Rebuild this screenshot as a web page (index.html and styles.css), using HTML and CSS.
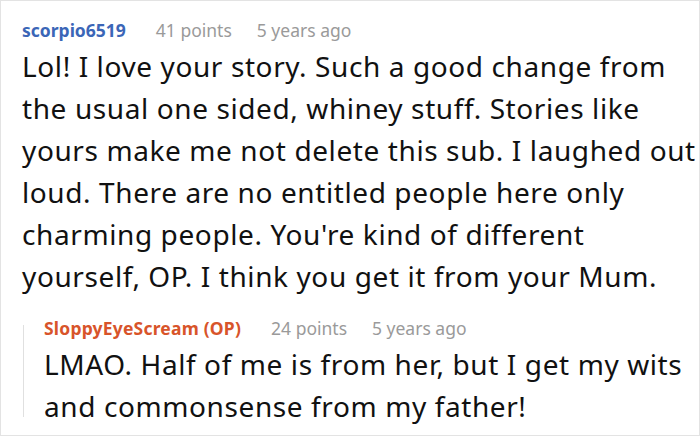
FILE: index.html
```html
<!DOCTYPE html>
<html lang="en">
<head>
    <meta charset="UTF-8">
    <title>Comment thread</title>
    <link rel="stylesheet" href="styles.css">
</head>
<body>
    <div class="thread">
        <div class="comment">
            <div class="meta">
                <span class="author">scorpio6519</span>
                <span class="points">41 points</span>
                <span class="age">5 years ago</span>
            </div>
            <p class="text">Lol! I love your story. Such a good change from the usual one sided, whiney stuff. Stories like yours make me not delete this sub. I laughed out loud. There are no entitled people here only charming people. You're kind of different yourself, OP. I think you get it from your Mum.</p>

            <div class="comment reply">
                <div class="meta">
                    <span class="author op">SloppyEyeScream (OP)</span>
                    <span class="points">24 points</span>
                    <span class="age">5 years ago</span>
                </div>
                <p class="text">LMAO. Half of me is from her, but I get my wits and commonsense from my father!</p>
            </div>
        </div>
    </div>
</body>
</html>
```

FILE: styles.css
```css
body {
    margin: 0;
    background-color: white;
    font-family: "Noto Sans", "Open Sans", sans-serif;
}
.thread {
    width: 700px;
    height: 436px;
    box-sizing: border-box;
    border: 1px solid #e3e3e3;
    padding: 14px 0 0 21px;
    overflow: hidden;
}
.meta {
    font-size: 17.5px;
    line-height: 30px;
    color: #9a9a9a;
    display: flex;
}
.author {
    font-weight: bold;
    color: #3b66b7;
    margin-right: 30px;
}
.author.op {
    color: #d8542a;
    letter-spacing: 0.2px;
}
.points {
    margin-right: 25px;
}
.text {
    margin: 0;
    font-size: 28px;
    line-height: 42px;
    letter-spacing: 0.6px;
    color: #111;
}
.reply {
    position: relative;
    margin-top: 16px;
    padding-left: 22px;
}
.reply::before {
    content: "";
    position: absolute;
    left: 1px;
    top: 12px;
    bottom: 10px;
    width: 1px;
    background-color: #e0e0e0;
}
```
